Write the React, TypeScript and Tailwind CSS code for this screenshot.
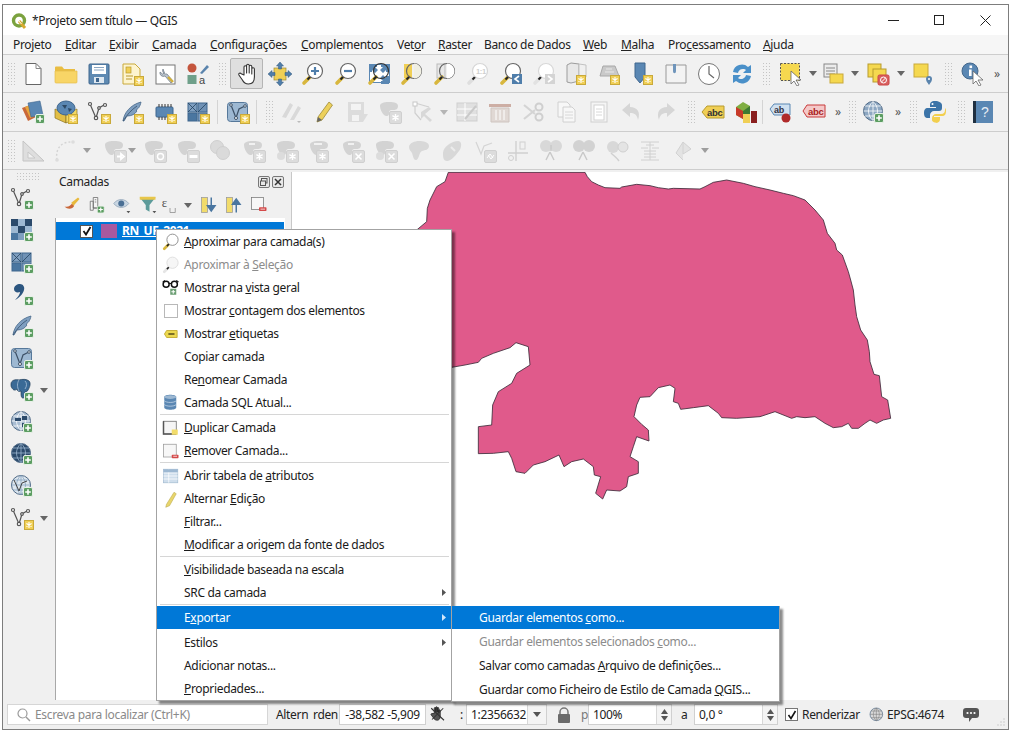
import React from "react";

type P = { children?: React.ReactNode };
const Sv = ({ children, s = 24 }: P & { s?: number }) => (
  <svg width={s} height={s} viewBox="0 0 24 24" fill="none" className="block shrink-0">{children}</svg>
);
const StarB = ({ x = 14, y = 14 }: { x?: number; y?: number }) => (
  <g transform={`translate(${x} ${y})`}>
    <rect x=".5" y=".5" width="9" height="9" fill="#f0cf55" stroke="#c9a93a" />
    <path d="M5 2v6M2.400 3.500l5.200 3M7.600 3.500l-5.200 3" stroke="#fff" strokeWidth="1.100" />
  </g>
);
const PlusB = ({ x = 14, y = 14 }: { x?: number; y?: number }) => (
  <g transform={`translate(${x} ${y})`}>
    <rect x=".5" y=".5" width="9" height="9" rx="1.500" fill="#5c9d62" stroke="#e8f1e8" />
    <path d="M5 2.200v5.600M2.200 5h5.600" stroke="#fff" strokeWidth="1.600" />
  </g>
);
const VShape = ({ c = "#555" }: { c?: string }) => (
  <g stroke={c} strokeWidth="1.200" fill="#fff">
    <path d="M3 4l6 14 3-10 5-3" fill="none" />
    <circle cx="3" cy="4" r="1.500" /><circle cx="12" cy="8" r="1.300" /><circle cx="18" cy="5" r="1.500" /><circle cx="9" cy="18" r="1.700" />
  </g>
);
const Feather = () => (
  <g>
    <path d="M3 21C4 13 10 5 21 2c-1 5-3 7-5 8l1 1c-2 3-5 5-10 5l-3 5z" fill="#7f9fc0" stroke="#48688a" strokeWidth=".8" />
    <path d="M3 21C7 15 11 10 17 6" stroke="#36506c" strokeWidth=".8" />
  </g>
);
const GridI = () => (
  <g stroke="#3f668e" strokeWidth="1">
    <rect x="2" y="3" width="9" height="9" fill="#7f9fc0" /><rect x="12" y="3" width="9" height="9" fill="#6f91b5" />
    <rect x="2" y="13" width="9" height="8" fill="#4a76a0" /><rect x="12" y="13" width="9" height="8" fill="#7f9fc0" />
    <path d="M2 3l9 9M11 3l-9 9M12 12l9-9" stroke="#23425f" strokeWidth=".8" />
  </g>
);
const VBox = () => (
  <g>
    <rect x="1.500" y="2.500" width="20" height="19" rx="3" fill="#9db8d2" stroke="#56789a" />
    <path d="M5 5l5 13 3-9 6-3" stroke="#3c5066" strokeWidth="1.200" />
    <circle cx="5" cy="5" r="1.300" fill="#fff" stroke="#3c5066" /><circle cx="10" cy="18" r="1.500" fill="#fff" stroke="#3c5066" /><circle cx="19" cy="6" r="1.300" fill="#fff" stroke="#3c5066" />
  </g>
);
const Globe = ({ f = "#8da7c2", l = "#fff" }: { f?: string; l?: string }) => (
  <g>
    <circle cx="11" cy="11" r="9.500" fill={f} stroke="#4c6784" />
    <path d="M1.500 11h19M3 6h16M3 16h16M11 1.500v19M11 1.500c-6 5-6 14 0 19M11 1.500c6 5 6 14 0 19" stroke={l} strokeWidth=".8" />
  </g>
);
const Glass = ({ fill = "#fff", k = "#666", h = "#d8b73e", children }: P & { fill?: string; k?: string; h?: string }) => (
  <g>
    <path d="M9 15L3 21" stroke={h} strokeWidth="3.600" strokeLinecap="round" />
    <path d="M9.500 14.500l-3 3" stroke="#222" strokeWidth="2" />
    <circle cx="14" cy="9" r="7.500" fill={fill} stroke={k} strokeWidth="1.200" />
    {children}
  </g>
);
const Blob = ({ c = "#d3d3d3" }: { c?: string }) => (
  <path d="M2 6c0-3 4-4 8-4s10 0 10 4-3 4-6 4-3 2-3 4-3 3-5 1-4-6-4-9z" fill={c} />
);
const GB = ({ children, x = 11, y = 11 }: P & { x?: number; y?: number }) => (
  <g transform={`translate(${x} ${y})`}>
    <rect x=".5" y=".5" width="12" height="12" rx="1.500" fill="#dcdcdc" stroke="#cfcfcf" />
    {children}
  </g>
);
const Star12 = () => <path d="M6.500 3v7M3.400 4.700l6.200 3.600M9.600 4.700L3.400 8.300" stroke="#fff" strokeWidth="1.400" />;
const X12 = () => <path d="M3.500 3.500l6 6M9.500 3.500l-6 6" stroke="#fff" strokeWidth="1.600" />;

const Grip = ({ className = "" }: { className?: string }) => (
  <div className={"w-[9px] h-[24px] shrink-0 bg-[radial-gradient(#c4c4c4_0.8px,transparent_0.9px)] bg-[length:3px_3px] " + className} />
);
const Cell = ({ children, className = "w-[33px]" }: P & { className?: string }) => (
  <div className={"flex items-center justify-center shrink-0 " + className}>{children}</div>
);
const Drop = ({ className = "", c = "#666" }: { className?: string; c?: string }) => (
  <div className={"w-[12px] flex justify-center shrink-0 " + className}>
    <svg width="8" height="5" viewBox="0 0 8 5"><path d="M0 0h8L4 5z" fill={c} /></svg>
  </div>
);
const More = ({ className = "w-[16px]" }: { className?: string }) => (
  <div className={"flex justify-center shrink-0 text-[12px] leading-none text-[#555] " + className}>»</div>
);
const VSep = ({ className = "" }: { className?: string }) => <div className={"w-px h-[24px] bg-[#d4d4d4] shrink-0 " + className} />;
const Row = ({ children, className = "h-[38px]" }: P & { className?: string }) => (
  <div className={"flex items-center pl-[4px] border-b border-[#cdcdcd] bg-[#f1f1f1] " + className}>{children}</div>
);

const menuItems: [string, string, string, string][] = [
  ["", "", "Projeto", "w-[52px]"],
  ["", "E", "ditar", "w-[44px]"],
  ["", "E", "xibir", "w-[43px]"],
  ["", "C", "amada", "w-[58px]"],
  ["", "C", "onfigurações", "w-[91px]"],
  ["", "C", "omplementos", "w-[96px]"],
  ["Vet", "o", "r", "w-[41px]"],
  ["", "R", "aster", "w-[46px]"],
  ["", "", "Banco de Dados", "w-[99px]"],
  ["", "W", "eb", "w-[38px]"],
  ["", "M", "alha", "w-[47px]"],
  ["Pro", "c", "essamento", "w-[95px]"],
  ["", "A", "juda", "w-[40px]"],
];

function Toolbar1() {
  return (
    <Row>
      <Grip />
      <Cell><Sv><path d="M5 1.500h10l5 5v16H5z" fill="#fff" stroke="#666" /><path d="M15 1.500v5h5" stroke="#888" /></Sv></Cell>
      <Cell><Sv><path d="M1 5.500a1 1 0 011-1h6l2 2.500h11v2H1z" fill="#e9bd42" /><path d="M1 20V9h22v11a1 1 0 01-1 1H2a1 1 0 01-1-1z" fill="#f8d566" stroke="#e5bd4a" strokeWidth=".7" /></Sv></Cell>
      <Cell><Sv><path d="M2 3a1 1 0 011-1h18a1 1 0 011 1v18a1 1 0 01-1 1H3a1 1 0 01-1-1z" fill="#5f8ab2" stroke="#3f668e" /><rect x="5" y="3" width="14" height="9" fill="#fff" /><path d="M7 5.500h10M7 8h10" stroke="#8aa6c2" /><rect x="7" y="15" width="10" height="6" fill="#dfe8f0" /><rect x="9" y="16" width="3" height="4" fill="#3f668e" /></Sv></Cell>
      <Cell><Sv><path d="M3 2h12l5 5v15H3z" fill="#fdf4cf" stroke="#c9a93a" /><rect x="6" y="5" width="5" height="6" fill="#f0cf55" stroke="#b8982e" strokeWidth=".7" /><path d="M6 14h7M6 17h6" stroke="#b8982e" /><StarB /></Sv></Cell>
      <Cell><Sv><rect x="3" y="3" width="19" height="19" fill="#fff" stroke="#777" /><path d="M10 7a3.500 3.500 0 004 5l6 7-2 2-6-7a3.500 3.500 0 01-5-4l2.500 2 2-1z" fill="#b9c2cb" stroke="#6a7682" strokeWidth=".7" /><path d="M15 15l5 5" stroke="#d2b03a" strokeWidth="2.400" /></Sv></Cell>
      <Cell><Sv><circle cx="6" cy="6" r="4.500" fill="#c4553d" /><rect x="1.500" y="13" width="9" height="9" fill="#6fa08a" /><path d="M14 11l7-8 2 2-7 7z" fill="#5a84ad" /><text x="13" y="22" fontSize="11" fontFamily="Liberation Sans" fill="#444">a</text></Sv></Cell>
      <Grip className="ml-[4px]" />
      <div className="ml-[3px] w-[33px] h-[31px] flex items-center justify-center shrink-0 rounded-[2px] bg-[#dfdfdf] border border-[#b5b5b5]">
        <Sv><path d="M9 13V5a1.300 1.300 0 012.600 0v6V3.500a1.300 1.300 0 012.600 0V11 4.600a1.300 1.300 0 012.600 0V12 7a1.300 1.300 0 012.600 0v8c0 4-2 7-6 7-3 0-4.500-1-6-4l-3.500-5c-.8-1.500 1.200-2.500 2.300-1.300z" fill="#fff" stroke="#333" strokeWidth="1.100" strokeLinejoin="round" /></Sv>
      </div>
      <Cell><Sv><rect x="6" y="6" width="12" height="12" fill="#f0cf55" stroke="#9f8a33" strokeWidth=".7" /><path d="M12 0l3.500 4h-2v3h-3V4h-2zM12 24l3.500-4h-2v-3h-3v3h-2zM0 12l4-3.500v2h3v3H4v2zM24 12l-4-3.500v2h-3v3h3v2z" fill="#4f7eab" stroke="#36587a" strokeWidth=".5" /></Sv></Cell>
      <Cell><Sv><Glass><path d="M14 5v8M10 9h8" stroke="#4f7eab" strokeWidth="2.200" /></Glass></Sv></Cell>
      <Cell><Sv><Glass><path d="M10 9h8" stroke="#4f7eab" strokeWidth="2.200" /></Glass></Sv></Cell>
      <Cell><Sv><rect x="2.500" y="2.500" width="20" height="18" fill="#fff" stroke="#5a87b3" /><path d="M2 2h8v3H8l3 3-3 3-3-3v2H2zM22 2v8h-3V8l-3 3-3-3 3-3h-2V2zM22 22h-8v-3h2l-3-3 3-3 3 3v-2h3z" fill="#5a87b3" /><Glass fill="transparent" k="#333" /></Sv></Cell>
      <Cell><Sv><rect x="4" y="2" width="8" height="14" fill="#f0cf55" /><Glass fill="transparent"><path d="M14 1.500a7.500 7.500 0 010 15z" fill="#f0efe3" /></Glass></Sv></Cell>
      <Cell><Sv><rect x="4" y="2" width="8" height="14" fill="#e8e8e8" stroke="#bbb" /><Glass fill="transparent"><path d="M14 1.500a7.500 7.500 0 010 15z" fill="#fff" /></Glass></Sv></Cell>
      <Cell><Sv><Glass k="#d6d6d6" h="#dedede"><text x="10" y="12" fontSize="7.500" fontFamily="Liberation Sans" fontWeight="700" fill="#cfcfcf">1:1</text></Glass></Sv></Cell>
      <Cell><Sv><Glass /><rect x="13" y="12" width="10" height="10" fill="#4f7eab" /><path d="M20 14l-4 3 4 3" stroke="#fff" strokeWidth="1.600" /></Sv></Cell>
      <Cell><Sv><Glass k="#d8d8d8" h="#e2e2e2" /><rect x="13" y="12" width="10" height="10" fill="#d4d4d4" /><path d="M16 14l4 3-4 3" stroke="#fff" strokeWidth="1.600" /></Sv></Cell>
      <Cell><Sv><path d="M2 3l4-2 8 1v17l-8 2-4-1z" fill="#e8e8e8" stroke="#9c9c9c" /><path d="M14 2l7 1v12H14z" fill="#f0f0f0" stroke="#c2c2c2" /><StarB x={11} y={13} /></Sv></Cell>
      <Cell><Sv><path d="M5 4h12l4 10H2z" fill="#c9c9c9" stroke="#a8a8a8" /><path d="M8 7h6M7 10h9" stroke="#e8e8e8" /><StarB x={12} y={13} /></Sv></Cell>
      <Cell><Sv><path d="M4 1h10v14l-5 6-5-6z" fill="#5a87b3" stroke="#3f668e" /><StarB x={12} y={13} /></Sv></Cell>
      <Cell><Sv><path d="M2 3h20v18H2z" fill="#f3f3f3" stroke="#999" /><path d="M9 2v7c0 3 3 3 3 0V2z" fill="#6f95bb" /></Sv></Cell>
      <Cell><Sv><circle cx="12" cy="12" r="10.500" fill="#fff" stroke="#777" /><path d="M12 4v8l5 4" stroke="#666" strokeWidth="1.200" /></Sv></Cell>
      <Cell><Sv><path d="M3 10a9 9 0 0115-5l3-2v8h-8l3-3a5 5 0 00-8 3z" fill="#4a90c9" /><path d="M21 14a9 9 0 01-15 5l-3 2v-8h8l-3 3a5 5 0 008-3z" fill="#4a90c9" /></Sv></Cell>
      <Grip className="ml-[4px]" />
      <Cell className="w-[33px] ml-[3px]"><Sv><rect x="1.500" y="1.500" width="19" height="17" fill="#f5d84f" stroke="#555" strokeDasharray="2 1.500" /><path d="M12 9l10 9h-5l3 5-2 1-3-5-3 3z" fill="#fff" stroke="#666" strokeWidth=".8" /></Sv></Cell>
      <Drop />
      <Cell className="w-[30px]"><Sv><rect x="2" y="2" width="13" height="13" fill="#ececec" stroke="#888" /><path d="M4 6h9M4 9h9M4 12h9" stroke="#888" /><rect x="8" y="12" width="13" height="9" fill="#f5d84f" stroke="#c9a93a" /></Sv></Cell>
      <Drop />
      <Cell className="w-[34px]"><Sv><rect x="2" y="2" width="13" height="13" fill="#f5d84f" stroke="#b89b2e" /><rect x="7" y="7" width="13" height="13" fill="#f5d84f" stroke="#b89b2e" /><rect x="12" y="13" width="11" height="10" rx="1.500" fill="#d86060" stroke="#c44" /><circle cx="17.500" cy="18" r="3" stroke="#fff" /><path d="M15.500 20l4-4" stroke="#fff" /></Sv></Cell>
      <Drop />
      <Cell className="w-[34px]"><Sv><rect x="2" y="2" width="14" height="13" fill="#f5d84f" stroke="#c9a93a" /><path d="M17 23c-2-3-3-4-3-6a3 3 0 016 0c0 2-1 3-3 6z" fill="#5a84ad" /><circle cx="17" cy="17" r="1" fill="#fff" /></Sv></Cell>
      <Grip className="ml-[3px]" />
      <Cell className="w-[33px] ml-[3px]"><Sv><circle cx="9" cy="9" r="8" fill="#5a87b3" stroke="#44688c" /><rect x="8" y="7.500" width="2.600" height="6.500" fill="#fff" /><rect x="8.500" y="3.500" width="2.600" height="2.600" fill="#fff" /><path d="M12 9l10 9h-5l3 5-2 1-3-5-3 3z" fill="#fff" stroke="#666" strokeWidth=".8" /></Sv></Cell>
      <More />
    </Row>
  );
}

function Toolbar2() {
  return (
    <Row className="h-[39px]">
      <Grip />
      <Cell><Sv><path d="M1 8l8-3 6 12-8 4z" fill="#c9683a" /><path d="M4 7l10-4 4 12-9 3z" fill="#e8a63c" /><path d="M7 3l12-2 3 14-12 2z" fill="#5a87b3" stroke="#3f668e" strokeWidth=".6" /><PlusB /></Sv></Cell>
      <Cell><Sv><path d="M1 9l11 5v9L1 18z" fill="#e2be45" stroke="#8a7322" strokeWidth=".7" /><path d="M23 9l-11 5v9l11-5z" fill="#f3d863" stroke="#8a7322" strokeWidth=".7" /><ellipse cx="12" cy="8" rx="9" ry="7" fill="#5a87b3" stroke="#3f668e" /><path d="M8 5h5l-2 4zM14 8l4 1-3 3z" fill="#2d4a66" /><StarB /></Sv></Cell>
      <Cell><Sv><VShape /><StarB /></Sv></Cell>
      <Cell><Sv><Feather /><StarB /></Sv></Cell>
      <Cell><Sv><rect x="3" y="7" width="17" height="10" rx="1" fill="#5a87b3" stroke="#3f668e" /><path d="M6 4v3M9 4v3M12 4v3M15 4v3M18 4v3M6 17v3M9 17v3M12 17v3M15 17v3" stroke="#333" /><StarB /></Sv></Cell>
      <Cell><Sv><GridI /><StarB /></Sv></Cell>
      <VSep className="ml-[3px]" />
      <Cell className="w-[33px] ml-[3px]"><Sv><VBox /><StarB /></Sv></Cell>
      <VSep className="ml-[2px]" />
      <Grip className="ml-[8px]" />
      <Cell><Sv><path d="M3 17L11 3l3 2-7 13zM11 20l8-14 3 2-7 12z" fill="#d9d9d9" /><path d="M18 21h4l-2 2z" fill="#bbb" /></Sv></Cell>
      <Cell><Sv><path d="M6 17L17 2l3.500 3L10 20l-5 2z" fill="#ecd05c" stroke="#9d8a3a" strokeWidth=".8" /><path d="M5 22l1-5 4 3z" fill="#666" /></Sv></Cell>
      <Cell><Sv><path d="M3 2h16v12h4l-5 8H3z" fill="#dcdcdc" /><rect x="6" y="4" width="10" height="6" fill="#f3f3f3" /><rect x="7" y="15" width="7" height="6" fill="#f3f3f3" /></Sv></Cell>
      <Cell><Sv><Blob /><GB><Star12 /></GB></Sv></Cell>
      <Cell><Sv><path d="M4 3v10l6 7M4 3l14 4" stroke="#cfcfcf" strokeWidth="1.200" /><rect x="2" y="2" width="4" height="4" fill="#fff" stroke="#c8c8c8" /><path d="M10 12l8-5 2 2-6 5 7 6-2 2-6-6-3 3z" fill="#d8d8d8" /></Sv></Cell>
      <Drop className="ml-[-1px]" c="#b5b5b5" />
      <Cell><Sv><rect x="2" y="3" width="20" height="18" fill="#e0e0e0" stroke="#cfcfcf" /><path d="M2 9h20M2 15h20M10 3v18" stroke="#fff" /><path d="M10 19L21 6" stroke="#c9c9c9" strokeWidth="2" /></Sv></Cell>
      <Cell><Sv><rect x="1" y="4" width="22" height="3" fill="#cdaea4" /><path d="M3 8h18v14H3z" fill="#e0d8d4" stroke="#cfc5c0" /><path d="M8 10v10M12 10v10M16 10v10" stroke="#fff" /></Sv></Cell>
      <Cell><Sv><path d="M3 5l11 9M3 19l11-9" stroke="#d4d4d4" strokeWidth="2.200" /><circle cx="18" cy="7" r="3.500" stroke="#cfcfcf" strokeWidth="2" /><circle cx="18" cy="17" r="3.500" stroke="#cfcfcf" strokeWidth="2" /></Sv></Cell>
      <Cell><Sv><path d="M4 2h9l3 3v12H4z" fill="#f7f7f7" stroke="#d0d0d0" /><path d="M9 7h9l3 3v12H9z" fill="#f7f7f7" stroke="#d0d0d0" /><path d="M11 12h8M11 15h8M11 18h8" stroke="#d8d8d8" /></Sv></Cell>
      <Cell><Sv><rect x="4" y="2" width="16" height="20" fill="#f5f5f5" stroke="#cfcfcf" /><rect x="7" y="5" width="10" height="15" fill="#fff" stroke="#d2d2d2" /><path d="M9 9h6M9 12h6M9 15h6" stroke="#d8d8d8" /></Sv></Cell>
      <Cell><Sv><path d="M10 3l-8 7 8 7v-4c4 0 7 1 8 7 3-8-1-13-8-13z" fill="#d6d6d6" /></Sv></Cell>
      <Cell><Sv><path d="M14 3l8 7-8 7v-4c-4 0-7 1-8 7-3-8 1-13 8-13z" fill="#d6d6d6" /></Sv></Cell>
      <Grip className="ml-[6px]" />
      <Cell><Sv><path d="M1 12l5-6h17v12H6z" fill="#f0cf55" stroke="#b89b2e" /><text x="6" y="15.500" fontSize="9.500" fontFamily="Liberation Sans" fontWeight="700" fill="#333">abc</text></Sv></Cell>
      <Cell><Sv><path d="M2 7l7-5 7 4v8l-7 5-7-4z" fill="#7fae42" /><path d="M2 7l7 4v8l-7-4z" fill="#c83a2a" /><path d="M9 11l7-5v8l-7 5z" fill="#3e7a32" /><rect x="9" y="14" width="7" height="9" fill="#f0cf55" /><rect x="17" y="11" width="6" height="12" fill="#8a1f1f" /></Sv></Cell>
      <VSep />
      <Cell className="w-[33px] ml-[1px]"><Sv><path d="M1 9l4-5h16v11H5z" fill="#cfe0f0" stroke="#5a87b3" /><text x="5" y="13" fontSize="9" fontFamily="Liberation Sans" fontWeight="700" fill="#334">ab</text><circle cx="17" cy="18" r="4.500" fill="#b02a2a" /></Sv></Cell>
      <Cell><Sv><path d="M1 11l4-6h18v12H5z" fill="#f4c8c8" stroke="#c83a3a" /><text x="6" y="15" fontSize="9.500" fontFamily="Liberation Sans" fontWeight="700" fill="#a22">abc</text></Sv></Cell>
      <More />
      <Grip className="ml-[2px]" />
      <Cell><Sv><Globe /><PlusB x={12} y={13} /></Sv></Cell>
      <More />
      <Grip className="ml-[3px]" />
      <Cell><Sv><path d="M12 1c-4 0-5 2-5 4v2h6v1H5c-3 0-4 2-4 5s1 5 4 5h2v-3c0-2 2-4 4-4h5c2 0 3-1 3-3V5c0-2-3-4-7-4z" fill="#3c74a8" /><path d="M12 23c4 0 5-2 5-4v-2h-6v-1h8c3 0 4-2 4-5 0-1 0-2-1-3v2c0 2-1 4-4 4h-5c-2 0-4 2-4 4v2c0 2 3 3 7 3z" fill="#f2cf4e" /><circle cx="9.500" cy="4" r="1" fill="#fff" /></Sv></Cell>
      <Grip className="ml-[6px]" />
      <Cell><Sv><rect x="2" y="1" width="20" height="22" fill="#5a87b3" /><rect x="2" y="1" width="3" height="22" fill="#1f2f40" /><text x="10" y="17" fontSize="14" fontFamily="Liberation Sans" fill="#e8eef5">?</text></Sv></Cell>
    </Row>
  );
}

const Toolbar3 = () => (
  <Row>
    <Grip />
    <Cell><Sv><path d="M2 2v20h21z" fill="#dedede" stroke="#c4c4c4" /><path d="M7 13v6h7z" fill="#f1f1f1" stroke="#c8c8c8" /></Sv></Cell>
    <Cell className="w-[32px]"><Sv><path d="M4 21C2 10 8 2 20 3" stroke="#d4d4d4" strokeWidth="1.400" strokeDasharray="2 2" /><circle cx="4" cy="21" r="1.800" fill="#ddd" /><circle cx="20" cy="3" r="1.800" fill="#ddd" /></Sv></Cell>
    <Drop c="#9e9e9e" />
    <Cell className="w-[33px] ml-[5px]"><Sv><Blob /><GB><path d="M3 6.500h4V4l3 2.500L7 9V6.500" stroke="#fff" strokeWidth="1.800" /></GB></Sv></Cell>
    <Drop className="ml-[-5px]" c="#9e9e9e" />
    <Cell><Sv><Blob /><GB><circle cx="6.500" cy="6.500" r="3" stroke="#fff" strokeWidth="1.400" /></GB></Sv></Cell>
    <Cell><Sv><Blob /><GB><path d="M2.500 6.500h8" stroke="#fff" strokeWidth="3" /></GB></Sv></Cell>
    <Cell><Sv><circle cx="8" cy="8" r="6.500" fill="#dadada" stroke="#cfcfcf" /><circle cx="14" cy="14" r="6.500" fill="#dadada" stroke="#cfcfcf" /></Sv></Cell>
    <Cell><Sv><Blob /><path d="M7 5h6" stroke="#f1f1f1" strokeWidth="2" /><GB><Star12 /></GB></Sv></Cell>
    <Cell><Sv><Blob /><circle cx="6" cy="17" r="4" fill="#dcdcdc" /><GB><Star12 /></GB></Sv></Cell>
    <Cell><Sv><Blob /><path d="M6 5h8" stroke="#f1f1f1" strokeWidth="2" /><GB x={8}><Star12 /></GB></Sv></Cell>
    <Cell><Sv><Blob /><path d="M7 5h6" stroke="#f1f1f1" strokeWidth="2" /><GB><X12 /></GB></Sv></Cell>
    <Cell><Sv><Blob /><circle cx="6" cy="17" r="4" fill="#dcdcdc" /><GB><X12 /></GB></Sv></Cell>
    <Cell><Sv><path d="M2 8c0-4 6-6 10-6s10 1 10 5-4 4-7 5-3 9-6 9-3-5-4-7-3-3-3-6z" fill="#d8d8d8" /></Sv></Cell>
    <Cell><Sv><path d="M3 14C3 8 12 2 18 2c4 0 4 6 1 10s-8 10-12 10-4-4-4-8z" fill="#d8d8d8" /><path d="M11 8l4 4" stroke="#ececec" strokeWidth="2" /></Sv></Cell>
    <Cell><Sv><path d="M3 3l5 12 3-8 8-3" stroke="#d4d4d4" strokeWidth="1.200" /><GB><path d="M3 8l3-4 3 4M10 5l-3 4-3-4" stroke="#fff" /></GB></Sv></Cell>
    <Cell><Sv><path d="M2 14h20M10 2v20" stroke="#d0d0d0" strokeWidth="1.400" /><circle cx="5" cy="19" r="2.500" stroke="#d0d0d0" /><rect x="14" y="3" width="5" height="7" stroke="#d0d0d0" /></Sv></Cell>
    <Cell><Sv><circle cx="7" cy="7" r="6" fill="#d8d8d8" /><circle cx="17" cy="7" r="6" fill="#d8d8d8" /><path d="M12 6v6M7 21l4-8M15 21l-4-8" stroke="#c8c8c8" strokeWidth="1.400" /></Sv></Cell>
    <Cell><Sv><circle cx="7" cy="7" r="6" fill="#d2d2d2" /><circle cx="17" cy="7" r="6" fill="#d2d2d2" /><path d="M7 21l4-8M15 21l-4-8" stroke="#c8c8c8" strokeWidth="1.400" /></Sv></Cell>
    <Cell><Sv><circle cx="8" cy="8" r="6" fill="#d8d8d8" /><circle cx="18" cy="8" r="5" fill="#e4e4e4" stroke="#cfcfcf" /><path d="M6 14c3 3 6 5 8 8" stroke="#d0d0d0" strokeWidth="1.400" /></Sv></Cell>
    <Cell><Sv><path d="M3 3h18M12 3v18M3 9h7M14 9h7M6 15h12M3 21h18M8 6h8M6 12h12M6 18h12" stroke="#d0d0d0" /></Sv></Cell>
    <Cell><Sv><path d="M12 3L5 14l7 7M12 3l8 7-8 5z" fill="#e3e3e3" stroke="#d2d2d2" /></Sv></Cell>
    <Drop c="#9e9e9e" />
  </Row>
);

const leftIcons = [
  <Sv key="1"><VShape /><PlusB /></Sv>,
  <Sv key="2"><rect x="1" y="1" width="7" height="7" fill="#2b4a6b" /><rect x="8" y="1" width="7" height="7" fill="#9db8d2" /><rect x="15" y="1" width="7" height="7" fill="#2b4a6b" /><rect x="1" y="8" width="7" height="7" fill="#9db8d2" /><rect x="8" y="8" width="7" height="7" fill="#2b4a6b" /><rect x="15" y="8" width="7" height="7" fill="#9db8d2" /><rect x="1" y="15" width="7" height="7" fill="#4a76a0" /><rect x="8" y="15" width="7" height="7" fill="#7f9fc0" /><PlusB /></Sv>,
  <Sv key="3"><GridI /><PlusB /></Sv>,
  <Sv key="4"><path d="M4 7c0-3 3-5 6-5s5 3 4 6c-1 4-5 8-9 10 3-3 5-6 5-8-3 1-6 0-6-3z" fill="#2c5680" /><PlusB /></Sv>,
  <Sv key="5"><Feather /><PlusB /></Sv>,
  <Sv key="6"><VBox /><PlusB /></Sv>,
  <Sv key="7"><path d="M1 6c0-4 5-5 8-4 3-1 8-1 10 1s1 6-1 9c-1 2-2 2-3 2 0 3 0 6-2 6s-2-3-2-7c-2 1-4 0-4-2-2 2-4 1-5-1S1 9 1 6z" fill="#3a6a96" stroke="#1d3a55" strokeWidth=".7" /><path d="M9 2c-2 3-2 7 0 11M15 3c2 2 2 5 0 8" stroke="#a9c1d8" strokeWidth=".8" /><PlusB /></Sv>,
  <Sv key="8"><Globe f="#a9bdd2" /><path d="M5 8h6v3H5zM12 6h5v4h-5zM12 13h4v4h-4z" fill="#2b4a6b" /><PlusB x={13} y={13} /></Sv>,
  <Sv key="9"><Globe f="#2b4a6b" l="#9db8d2" /><PlusB x={13} y={13} /></Sv>,
  <Sv key="10"><Globe f="#dde6ee" l="#8aa6c2" /><path d="M4 6l5 11 3-8 5-2" stroke="#444" /><PlusB x={13} y={13} /></Sv>,
  <Sv key="11"><VShape /><StarB /></Sv>,
];

const Mag = ({ g = false }: { g?: boolean }) => (
  <Sv s={18}><Glass k={g ? "#ddd" : "#888"} h={g ? "#e5e5e5" : "#d8b73e"} fill={g ? "#f6f6f6" : "#fff"} /></Sv>
);

type MI = { pre?: string; u?: string; post: string; icon?: React.ReactNode; dis?: boolean; arrow?: boolean; hi?: boolean };
const Sep = () => <div className="h-px mb-px ml-[3px] mr-[2px] bg-[#d6d6d6]" />;
const Item = ({ pre, u, post, icon, dis, arrow, hi }: MI) => (
  <div className={"h-[23px] flex items-center pl-[5px] " + (hi ? "bg-[#0078d7] text-white" : dis ? "text-[#8c8c8c]" : "text-[#1a1a1a]")}>
    <div className="w-[18px] mr-[4px] flex justify-center shrink-0">{icon}</div>
    <span className="whitespace-nowrap">{pre}{u ? <u>{u}</u> : null}{post}</span>
    {arrow ? (
      <svg width="4" height="7" viewBox="0 0 4 7" className="ml-auto mr-[5px]"><path d="M0 0l4 3.500L0 7z" fill={hi ? "#cfe6fa" : "#555"} /></svg>
    ) : null}
  </div>
);
const Sub = ({ pre, u, post, dis, hi }: MI) => (
  <div className={"h-[23px] flex items-center pl-[27px] " + (hi ? "bg-[#0078d7] text-white" : dis ? "text-[#8c8c8c]" : "text-[#1a1a1a]")}>
    <span className="whitespace-nowrap">{pre}{u ? <u>{u}</u> : null}{post}</span>
  </div>
);

function ContextMenu() {
  return (
    <div className="absolute left-[153px] top-[224px] w-[296px] bg-white border border-[#a3a3a3] shadow-[3px_3px_2px_rgba(0,0,0,0.45)] text-[12px]">
      <Item u="A" post="proximar para camada(s)" icon={<Mag />} />
      <Item pre="Aproximar à " u="S" post="eleção" dis icon={<Mag g />} />
      <Item pre="Mostrar na " u="v" post="ista geral" icon={<Sv s={18}><circle cx="5.500" cy="7" r="4" stroke="#111" strokeWidth="2" /><circle cx="16.500" cy="7" r="4" stroke="#111" strokeWidth="2" /><path d="M9 6h4M1 4l3-2M22 4l-3-2" stroke="#111" strokeWidth="1.500" /><rect x="11" y="13" width="8" height="8" fill="#6a9d72" /><path d="M15 14.500v5M12.500 17h5" stroke="#fff" strokeWidth="1.400" /></Sv>} />
      <Item pre="Mostrar " u="c" post="ontagem dos elementos" icon={<div className="w-[14px] h-[14px] border border-[#b8b8b8] bg-white" />} />
      <Item pre="Mostrar " u="e" post="tiquetas" icon={<svg width="14" height="8" viewBox="0 0 16 9"><path d="M3 .5h12v8H3L.5 4.500z" fill="#ecd84f" stroke="#c2a92e" /><path d="M5 4.500h7" stroke="#6c6020" strokeWidth="2" /></svg>} />
      <Item post="Copiar camada" />
      <Item pre="Re" u="n" post="omear Camada" />
      <Item post="Camada SQL Atual..." icon={<Sv s={18}><path d="M3 4c0-4 16-4 16 0v14c0 4-16 4-16 0z" fill="#5a87b3" /><path d="M3 9c3 3 13 3 16 0M3 14c3 3 13 3 16 0" stroke="#c8d8e8" /><ellipse cx="11" cy="4" rx="8" ry="2.500" fill="#9db8d2" /></Sv>} />
      <Sep />
      <Item u="D" post="uplicar Camada" icon={<Sv s={18}><rect x="2" y="3" width="17" height="17" fill="#f5f5f5" stroke="#666" /><path d="M2 3v17h17" stroke="#555" strokeWidth="2" /><rect x="13" y="14" width="8" height="7" fill="#f2dc6b" /></Sv>} />
      <Item u="R" post="emover Camada..." icon={<Sv s={18}><rect x="2" y="3" width="17" height="17" fill="#f7f7f7" stroke="#999" /><rect x="13" y="17" width="9" height="4.500" rx="1" fill="#d44a4a" /><path d="M15 19h5" stroke="#fff" /></Sv>} />
      <Sep />
      <Item pre="Abrir tabela de " u="a" post="tributos" icon={<Sv s={18}><rect x="2" y="3" width="19" height="18" fill="#cfdeec" stroke="#a6bdd3" /><path d="M2 8h19M2 12h19M2 16h19M9 3v18" stroke="#fff" /><rect x="2" y="3" width="19" height="4" fill="#9db8d2" /></Sv>} />
      <Item pre="Alternar " u="E" post="dição" icon={<Sv s={18}><path d="M6 19L16 3l3 2L10 21l-5 2z" fill="#e8d56c" stroke="#b7a445" strokeWidth=".7" /></Sv>} />
      <Item u="F" post="iltrar..." />
      <Item u="M" post="odificar a origem da fonte de dados" />
      <Sep />
      <Item u="V" post="isibilidade baseada na escala" />
      <Item post="SRC da camada" arrow />
      <Sep />
      <Item pre="E" u="x" post="portar" arrow hi />
      <div className="h-[2px]" />
      <Item post="Estilos" arrow />
      <Item post="Adicionar notas..." />
      <Item u="P" post="ropriedades..." />
    </div>
  );
}

function SubMenu() {
  return (
    <div className="absolute left-[448px] top-[601px] w-[329px] bg-white border border-[#a3a3a3] border-t-0 shadow-[3px_3px_2px_rgba(0,0,0,0.45)] text-[12px] flex flex-col gap-px">
      <Sub pre="Guardar elementos " u="c" post="omo..." hi />
      <Sub pre="Guardar elementos selecionados " u="c" post="omo..." dis />
      <Sub pre="Salvar como camadas " u="A" post="rquivo de definições..." />
      <Sub pre="Guardar como Ficheiro de Estilo de Camada " u="Q" post="GIS..." />
    </div>
  );
}

const Spin = () => (
  <div className="flex flex-col justify-center gap-[2px] w-[15px] h-full items-center border-l border-[#d8d8d8] bg-[#f4f4f4]">
    <svg width="7" height="5" viewBox="0 0 7 5"><path d="M0 5l3.500-5L7 5z" fill="#555" /></svg>
    <svg width="7" height="5" viewBox="0 0 7 5"><path d="M0 0l3.500 5L7 0z" fill="#555" /></svg>
  </div>
);

function StatusBar() {
  return (
    <div className="h-[29px] flex items-center bg-[#f0f0f0] text-[12px] text-[#222] pl-[4px]">
      <div className="w-[261px] h-[21px] flex items-center bg-white border border-[#d6d6d6] pl-[9px] text-[#8a8a8a] shrink-0">
        <svg width="14" height="14" viewBox="0 0 14 14" fill="none" className="mr-[4px]"><circle cx="5.500" cy="5.500" r="4.500" stroke="#9a9a9a" strokeWidth="1.200" /><path d="M9 9l4 4" stroke="#9a9a9a" strokeWidth="1.500" /></svg>
        Escreva para localizar (Ctrl+K)
      </div>
      <span className="ml-[8px] w-[37px] shrink-0">Altern</span>
      <span className="w-[26px] shrink-0">rden</span>
      <div className="w-[87px] h-[21px] bg-white border border-[#d0d0d0] flex items-center justify-center shrink-0">-38,582 -5,909</div>
      <div className="w-[24px] flex justify-center shrink-0"><Sv s={18}><path d="M7 10V3a1 1 0 012 0v5-6a1 1 0 012 0v6-5a1 1 0 012 0v6-3a1 1 0 012 0v8c0 3-2 5-4 5s-4-1-5-3l-3-4c-1-1 0-2 1-2z" fill="#555" stroke="#222" /><path d="M3 3l17 16M19 3L4 18" stroke="#333" strokeWidth="1.400" /></Sv></div>
      <span className="ml-[10px] w-[6px] shrink-0">:</span>
      <div className="w-[81px] h-[21px] bg-white border border-[#d0d0d0] flex items-center pl-[4px] shrink-0">
        <span className="flex-1">1:2356632</span>
        <div className="w-[19px] h-full flex justify-center items-center border-l border-[#d8d8d8] bg-[#f4f4f4]"><svg width="8" height="5" viewBox="0 0 8 5"><path d="M0 0h8L4 5z" fill="#555" /></svg></div>
      </div>
      <div className="w-[34px] flex justify-center shrink-0"><svg width="14" height="16" viewBox="0 0 14 16" fill="none"><path d="M3 7V5a4 4 0 018 0v2" stroke="#777" strokeWidth="1.500" /><rect x="1" y="7" width="12" height="9" rx="1" fill="#6b6b6b" /></svg></div>
      <span className="w-[7px] shrink-0 text-[#777]">p</span>
      <div className="w-[84px] h-[21px] bg-white border border-[#d0d0d0] flex items-center pl-[4px] shrink-0"><span className="flex-1">100%</span><Spin /></div>
      <span className="ml-[9px] w-[13px] shrink-0">a</span>
      <div className="w-[84px] h-[21px] bg-white border border-[#d0d0d0] flex items-center pl-[4px] shrink-0"><span className="flex-1">0,0 °</span><Spin /></div>
      <div className="ml-[7px] w-[13px] h-[13px] border border-[#777] bg-white flex items-center justify-center shrink-0"><svg width="10" height="10" viewBox="0 0 10 10" fill="none"><path d="M1.500 5l2.500 3.500L8.500 1" stroke="#111" strokeWidth="1.600" /></svg></div>
      <span className="ml-[4px] w-[62px] shrink-0">Renderizar</span>
      <div className="w-[23px] shrink-0 flex justify-center pl-[2px]"><Sv s={16}><Globe f="#d8d8d8" l="#777" /></Sv></div>
      <span className="w-[68px] shrink-0">EPSG:4674</span>
      <div className="w-[32px] shrink-0 flex justify-center"><svg width="16" height="15" viewBox="0 0 16 15"><path d="M3 1h10a3 3 0 013 3v4a3 3 0 01-3 3H9l-3 4v-4H3a3 3 0 01-3-3V4a3 3 0 013-3z" fill="#555" /><circle cx="4.500" cy="6" r="1.100" fill="#fff" /><circle cx="8" cy="6" r="1.100" fill="#fff" /><circle cx="11.500" cy="6" r="1.100" fill="#fff" /></svg></div>
    </div>
  );
}

const mapPath =
  "M115 22L525 22L532 35L545 50L565 60L585 68L630 70L635 66L680 58L720 62L745 68L775 72L790 70L870 72L885 65L910 52L950 45L1000 55L1035 65L1080 75L1120 85L1150 92L1185 105L1215 135L1240 165L1252 205L1275 235L1280 255L1297 270L1315 320L1322 345L1330 375L1335 420L1340 455L1352 495L1372 525L1378 560L1380 590L1392 628L1408 632L1415 695L1433 705L1442 760L1420 765L1400 775L1380 765L1365 775L1345 790L1325 790L1315 775L1295 785L1270 788L1245 775L1215 755L1185 758L1160 755L1145 760L1095 740L1050 755L980 760L935 758L925 745L895 722L850 728L812 733L805 715L790 710L795 670L780 660L745 668L720 695L690 697L680 720L672 755L695 778L715 795L717 828L680 815L670 845L660 875L685 890L685 925L655 935L650 965L630 978L590 975L578 1002L557 985L572 935L553 930L550 905L520 882L485 890L462 905L447 870L405 890L370 900L345 925L318 920L305 880L295 860L250 865L205 866L205 785L245 780L248 720L265 680L305 655L320 625L360 600L355 545L318 533L300 548L250 565L215 580L205 592L165 600L125 607L100 400L20 195L50 170L52 130L60 105L80 65L105 50Z";

export default function App() {
  return (
    <div className="w-[1012px] h-[731px] bg-white overflow-hidden pt-[4px] pl-[2px] font-['Noto_Sans','Open_Sans',sans-serif] tracking-[-0.33px]">
      <div className="relative w-[1007px] h-[726px] border border-[#7d7d7d] bg-[#f0f0f0] flex flex-col overflow-hidden">
        <div className="h-[30px] bg-white flex items-center shrink-0 pl-[8px] pt-[1px] text-[12px] text-[#222]">
          <svg width="16" height="16" viewBox="0 0 16 16" fill="none" className="mr-[5px]"><circle cx="8" cy="7.500" r="5.500" stroke="#7ba23f" strokeWidth="3.400" /><path d="M8 8l6 7" stroke="#d7a92f" strokeWidth="3" /><path d="M7 7l3.500 4" stroke="#fff" strokeWidth="1" /></svg>
          <span>*Projeto sem título — QGIS</span>
          <div className="ml-auto flex items-center pb-[1px]">
            <div className="w-[46px] flex justify-center"><div className="w-[11px] h-px bg-[#222]" /></div>
            <div className="w-[46px] flex justify-center"><div className="w-[10px] h-[10px] border border-[#222]" /></div>
            <div className="w-[46px] flex justify-center"><svg width="11" height="11" viewBox="0 0 11 11"><path d="M.5.500l10 10M10.500.500l-10 10" stroke="#222" /></svg></div>
          </div>
        </div>
        <div className="h-[20px] bg-[#f6f6f6] flex items-center shrink-0 pl-[10px] pt-[1px] text-[12px] text-[#222] border-b border-[#cdcdcd]">
          {menuItems.map(([a, u, b, w], i) => (
            <div key={i} className={"shrink-0 whitespace-nowrap " + w}>{a}{u ? <u>{u}</u> : null}{b}</div>
          ))}
        </div>
        <Toolbar1 />
        <Toolbar2 />
        <Toolbar3 />
        <div className="flex-1 min-h-0 flex">
          <div className="w-[51px] shrink-0 bg-[#f0f0f0] flex flex-col items-start pl-[7px]">
            <Grip className="!w-[24px] !h-[9px] mt-[2px] ml-[6px]" />
            <div className="flex flex-col">
              {leftIcons.map((ic, i) => (
                <div key={i} className="h-[32px] flex items-center relative first:mt-[1px]">
                  {ic}
                  {i === 6 || i === 10 ? <Drop className="absolute left-[28px]" /> : null}
                </div>
              ))}
            </div>
          </div>
          <div className="w-[237px] shrink-0 flex flex-col bg-[#f0f0f0]">
            <div className="h-[22px] flex items-center pl-[5px] text-[12px] text-[#222] pt-[1px]">
              <span className="flex-1">Camadas</span>
              <svg width="12" height="12" viewBox="0 0 12 12" fill="none" className="mr-[2px]"><rect x=".5" y=".5" width="11" height="11" rx="1.500" fill="#e8e8e8" stroke="#777" /><rect x="3.500" y="2.500" width="5.500" height="4.500" stroke="#555" /><rect x="2.500" y="5" width="5" height="4.500" fill="#e8e8e8" stroke="#555" /></svg>
              <svg width="12" height="12" viewBox="0 0 12 12" fill="none" className="mr-[7px]"><rect x=".5" y=".5" width="11" height="11" rx="1.500" fill="#e8e8e8" stroke="#777" /><path d="M3 3l6 6M9 3l-6 6" stroke="#333" strokeWidth="1.500" /></svg>
            </div>
            <div className="h-[26px] flex items-center pl-[5px]">
              <Cell className="w-[25px]"><Sv s={18}><path d="M2 14c5 1 8-1 10-4l3 3c-2 4-8 6-13 1z" fill="#c9683a" /><path d="M11 9l9-7 2 2-8 9z" fill="#e8b93c" /></Sv></Cell>
              <Cell className="w-[25px]"><Sv s={18}><path d="M7 2h6v14H7zM3 7h4v12H3z" fill="#f4f4f4" stroke="#666" /><path d="M13 16h-6M9 5h2M9 8h2" stroke="#666" /><PlusB x={12} y={13} /></Sv></Cell>
              <Cell className="w-[26px]"><Sv s={18}><path d="M1 10c5-7 15-7 20 0-5 7-15 7-20 0z" fill="#c9d6e2" stroke="#8ea2b5" /><circle cx="11" cy="10" r="4" fill="#4a6f94" /><path d="M18 20h5l-2.500 3z" fill="#555" /></Sv></Cell>
              <Cell className="w-[25px]"><Sv s={18}><path d="M1 2h21l-8 10v9l-5-3v-6z" fill="#5d9b9a" /><rect x="1" y="1" width="21" height="4" fill="#e8c64a" /><path d="M18 20h5l-2.500 3z" fill="#555" /></Sv></Cell>
              <Cell className="w-[20px]"><Sv s={18}><text x="1" y="15" fontSize="17" fontFamily="Liberation Serif" fill="#555">ε</text><path d="M12 16v6h7v-6" stroke="#8a8a8a" fill="none" /></Sv></Cell>
              <Drop className="w-[16px]" />
              <Cell className="w-[25px]"><Sv s={18}><rect x="2" y="2" width="8" height="20" fill="#f2dc6b" stroke="#999" /><path d="M15 2v14M10 13l5 7 5-7z" fill="#4a76a0" stroke="#4a76a0" strokeWidth="2" /></Sv></Cell>
              <Cell className="w-[25px]"><Sv s={18}><rect x="2" y="2" width="8" height="20" fill="#f2dc6b" stroke="#999" /><path d="M15 22V8M10 11l5-7 5 7z" fill="#4a76a0" stroke="#4a76a0" strokeWidth="2" /></Sv></Cell>
              <Cell className="w-[25px]"><Sv s={18}><rect x="2" y="2" width="16" height="16" fill="#f7f7f7" stroke="#777" /><rect x="12" y="15" width="10" height="5" rx="1" fill="#d44a4a" /><path d="M14 17.500h6" stroke="#fff" /></Sv></Cell>
            </div>
            <div className="flex-1 bg-white mr-[6px] ml-[1px] border-l border-[#a8a8a8] pt-[4px]">
              <div className="h-[18px] w-[228px] bg-[#0078d7] flex items-center text-[12px] font-bold text-white pl-[24px]">
                <div className="w-[13px] h-[13px] bg-white border border-[#555] flex items-center justify-center"><svg width="10" height="10" viewBox="0 0 10 10" fill="none"><path d="M1.500 5l2.500 3.500L8.500 1" stroke="#111" strokeWidth="1.800" /></svg></div>
                <div className="ml-[8px] w-[16px] h-[14px] bg-[#a8599f]" />
                <span className="ml-[5px] underline">RN_UF_2021</span>
              </div>
            </div>
          </div>
          <div className="relative flex-1 bg-white overflow-hidden mt-[2px] border-l border-[#c8c8c8]">
            <svg width="490" height="340" viewBox="0 0 1470 1020" className="absolute left-[118px] top-[-7px]">
              <path d={mapPath} fill="#e05a8b" stroke="#3b2a38" strokeWidth="2.500" strokeLinejoin="round" />
            </svg>
          </div>
        </div>
        <StatusBar />
        <ContextMenu />
        <SubMenu />
        <svg width="10" height="10" viewBox="0 0 10 10" className="absolute right-[2px] bottom-[2px]"><g fill="#c2c2c2"><circle cx="8" cy="2" r=".7" /><circle cx="5" cy="5" r=".7" /><circle cx="8" cy="5" r=".7" /><circle cx="2" cy="8" r=".7" /><circle cx="5" cy="8" r=".7" /><circle cx="8" cy="8" r=".7" /></g></svg>
      </div>
    </div>
  );
}
